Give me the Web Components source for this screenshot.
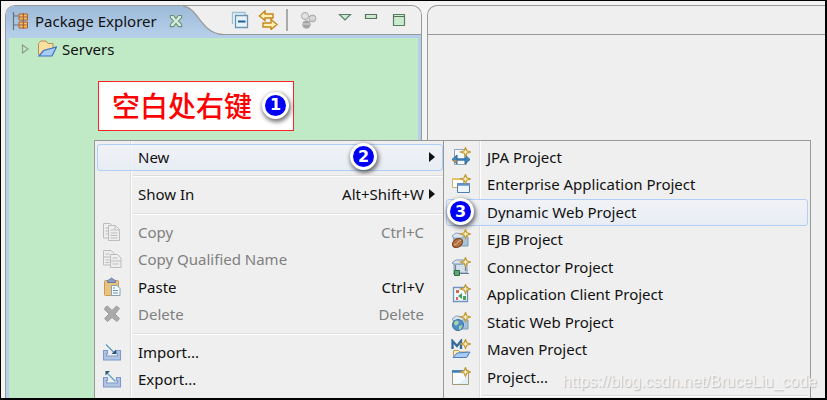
<!DOCTYPE html>
<html lang="en">
<head>
<meta charset="utf-8">
<title>Package Explorer</title>
<style>
  html, body { height: 100%; margin: 0; }
  body { font: 15px/20px "Noto Sans", "Noto Sans CJK SC", sans-serif; color: #1a1a1a; background: #efefef; overflow: hidden; }
</style>
</head>
<body>
<ide-window>
  <explorer-view slot="left" heading="Package Explorer">
    <tree-item>Servers</tree-item>
  </explorer-view>
  <editor-area slot="right"></editor-area>
  <note-box slot="over">空白处右键<step-badge slot="badge">1</step-badge></note-box>
  <menu-cascade slot="over">
    <context-menu label="Package Explorer menu">
      <menu-item active more>New<step-badge slot="badge" class="two">2</step-badge></menu-item>
      <menu-line></menu-line>
      <menu-item keys="Alt+Shift+W" more>Show In</menu-item>
      <menu-line></menu-line>
      <menu-item off icon="copy" keys="Ctrl+C">Copy</menu-item>
      <menu-item off icon="copyname">Copy Qualified Name</menu-item>
      <menu-item icon="paste" keys="Ctrl+V">Paste</menu-item>
      <menu-item off icon="delete" keys="Delete">Delete</menu-item>
      <menu-line></menu-line>
      <menu-item icon="import">Import...</menu-item>
      <menu-item icon="export">Export...</menu-item>
    </context-menu>
    <context-menu label="New" class="sub">
      <menu-item icon="jpa">JPA Project</menu-item>
      <menu-item icon="ear">Enterprise Application Project</menu-item>
      <menu-item active>Dynamic Web Project<step-badge slot="lead">3</step-badge></menu-item>
      <menu-item icon="ejb">EJB Project</menu-item>
      <menu-item icon="connector">Connector Project</menu-item>
      <menu-item icon="client">Application Client Project</menu-item>
      <menu-item icon="web">Static Web Project</menu-item>
      <menu-item icon="maven">Maven Project</menu-item>
      <menu-item icon="project">Project...</menu-item>
      <menu-line></menu-line>
    </context-menu>
  </menu-cascade>
  <water-mark slot="over">https://blog.csdn.net/BruceLiu_code</water-mark>
</ide-window>

<script>
const star = '<path d="M14.500 .5l1.300 3.200 3.700 1.300-3.700 1.300-1.300 3.200-1.300-3.200L9.500 5l3.700-1.300z" fill="#fff3c4" stroke="#c29a38" stroke-width="1.200"/>';
const jar = '<path d="M2 8c0-3 10-5 12-1l3 1v9H5z" fill="#a9c3da" stroke="#7898b5"/><path d="M1 7l4-3 9 1-3 4H3z" fill="#d9e5ef" stroke="#8aa3bb"/>';
const tray = '<path d="M1.500 8.500v9.500h17V8.500h-4v3h1v2.500H4.500v-2.500h1v-3z" fill="#b3c5e4" stroke="#7f9ac8" stroke-width="1.100"/>';
const ICONS = {
  package: '<path d="M2.500 1v18M2.500 5h5M2.500 14h5" stroke="#6a7078" fill="none" stroke-width="1.200"/><path d="M8 3h8.500v6H8zM8 11h8.500v6H8z" fill="#f5bd74" stroke="#a5632b"/><path d="M12.300 2v16M8 6h8.500M8 14h8.500" stroke="#a5632b" stroke-width="1.200"/>',
  close: '<path d="M2 2h4.500L10 6.500 13.500 2H18v3.500L13.500 10l4.500 4.500V18h-4.500L10 13.500 6.500 18H2v-3.500L6.500 10 2 5.500z" fill="#d3efd3" stroke="#6e8c79" stroke-width="1.500"/>',
  folder: '<path d="M1.500 16V4.500L4 2h5l2 2.500h5V9" fill="#f9dfa0" stroke="#b98f55"/><path d="M2 17l4.500-5.500L19.500 8 15 17z" fill="#a9ccf6" stroke="#3d70bd" stroke-width="1.200"/>',
  collapse: '<path d="M2.500 14V2.500H15v3" fill="#eaf5fc" stroke="#9ac0d6" stroke-width="1.300"/><path d="M5.500 5.500h12v12h-12z" fill="#e6f3fb" stroke="#6e93ae" stroke-width="1.300"/><path d="M8 11.500h7.500" stroke="#225f98" stroke-width="1.800"/>',
  link: '<path d="M7 1L1.500 6 7 10.500V8h8V4H7zM13 9.500l6 5-6 5V17H5v-4h8z" fill="#fff0b3" stroke="#c5851f" stroke-width="1.400"/>',
  focus: '<g stroke="#a8a8a8"><circle cx="6" cy="6" r="3.500" fill="#dedede"/><circle cx="13.500" cy="8.500" r="3.500" fill="#cecece"/><circle cx="7.500" cy="14.500" r="3.800" fill="#a2a2a2"/></g><path d="M3 6h6M10.500 8h6M4 14h7" stroke="#eee" stroke-width=".8"/>',
  viewmenu: '<path d="M4.500 4.500h11L10 10z" fill="#c8edcc" stroke="#5e7c69" stroke-width="1.200"/>',
  min: '<path d="M4.500 4.500h11v4h-11z" fill="#c8edcc" stroke="#5e6e63" stroke-width="1.200"/>',
  max: '<path d="M4.500 4.500h11v11h-11z" fill="#c8edcc" stroke="#5e7c69" stroke-width="1.200"/><path d="M4 6.500h12" stroke="#5e6e63" stroke-width="1.200"/>',
  copy: '<g fill="#eee" stroke="#bdbdbd"><path d="M1.500 1.500H8L11.500 5v11h-10z"/><path d="M6.500 3.500h7l4 4v11h-11z"/><path d="M3.500 6h3M3.500 9h3M3.500 12h3M8.500 8h4M8.500 11h7M8.500 13.500h7M8.500 16h7M13 4v4h4"/></g>',
  copyname: '<g fill="#eee" stroke="#bdbdbd"><path d="M1.500 1.500H9L12.500 5v11h-11z"/><path d="M2 8h9M3.500 5h4M3.500 11h4M3.500 13.500h4"/><path d="M8.500 5.500h7l3.500 3.500v9.500H8.500zM8.500 12h10.500M10.500 9h5M10.500 15h6"/></g>',
  paste: '<rect x="2.500" y="3.500" width="14" height="15" rx="1" fill="#e9c27b" stroke="#c79a57"/><path d="M5.500 5.500V3.500l2-1L9.500 1l2 1.500 2 1v2z" fill="#8b9dc2" stroke="#667ba6"/><path d="M9.500 8.500H15l3 3v7H9.500z" fill="#f8fbff" stroke="#86a0b4"/><path d="M11 11h2M11 13.500h5M11 16h5" stroke="#5c91ae"/>',
  delete: '<path d="M3.500 3l2-1L10 6.500 14.500 2l3 2.500-4.500 5.500 4.500 4.500-2.500 3-5-4-4.500 4-3-3L7 10 2.500 5.500z" fill="#aaa" stroke="#9e9e9e" stroke-linejoin="round"/>',
  import: tray + '<path d="M4 2.500l8 8" stroke="#5a9cc9" stroke-width="1.300"/><path d="M14 12V7.500L9.500 12z" fill="#2e5572"/>',
  export: tray + '<path d="M5 4l8.500 8.500" stroke="#5a9cc9" stroke-width="1.300"/><path d="M3.500 2v4.500L8 2z" fill="#2e5572"/>',
  jpa: '<path d="M3.500 2.500h12v15h-12z" fill="#f5f8fc" stroke="#8fa3ba"/><path d="M6 12.500h8" stroke="#3b78ad" stroke-width="2.500"/><path d="M1 12.500L6 8v9zM19 12.500L14 8v9z" fill="#4588bd" stroke="#2f6698"/><path d="M5.500 13l-4 .3 4 3.200z" fill="#c88b47"/>' + star,
  ear: '<path d="M1.500 4.500h11v9h-11z" fill="#fff" stroke="#c5b27e"/><path d="M1 5h11" stroke="#e5c26a" stroke-width="2"/><path d="M6.500 9.500h12v9h-12z" fill="#eef5fc" stroke="#537cae"/><path d="M6 10.500h13" stroke="#5f93cc" stroke-width="2.500"/>' + star,
  ejb: jar + '<ellipse cx="6.500" cy="14" rx="5.500" ry="4" transform="rotate(-35 6.500 14)" fill="#b47343" stroke="#784420"/><path d="M3 16c4 0 3-4 7-5" stroke="#e3b58d" fill="none"/>' + star,
  connector: '<path d="M3 7h13v9H3z" fill="#d3dfe9" stroke="#8098ad"/><path d="M1 6l4-3h8l-2 4H3z" fill="#dce7f1" stroke="#8098ad"/><path d="M4.500 8v6M14.500 8v6M2 16.500h16" stroke="#6d8193" stroke-width="1.200"/><path d="M3.500 13.500h5v5h-5z" fill="#63a579" stroke="#2b7044"/>' + star,
  client: '<path d="M2.500 3.500h14v14h-14z" fill="#f3f8ff" stroke="#7393bd" stroke-width="1.300"/><path d="M5 6h3v3H5z" fill="#d9654c"/><path d="M11 9v6l-4-3z" fill="#4a9a63"/><path d="M12 12h3v4h-3z" fill="#47a45b"/><path d="M5 13h2v3H5z" fill="#d9654c"/>' + star,
  web: jar + '<circle cx="7" cy="13" r="5.500" fill="#4f8fc7" stroke="#386f9f"/><path d="M4 9c3-1 5 0 3 3s-3 1-4 0zM8 14l4-1-2 4-2 1z" fill="#a8d5a5"/>' + star,
  maven: '<path d="M1.500 10V2L6 7l4-5v8" fill="none" stroke="#326b9d" stroke-width="2.300"/><path d="M2.500 17V11.500h5l1.500 1.500h8v4z" fill="#fff1bd" stroke="#bf9b58"/><path d="M2 18.500l4-4.500 13-1-3.500 5.500z" fill="#a8ccf5" stroke="#4e7fbd"/>' + star,
  project: '<path d="M1.500 3.500h16v14h-16z" fill="#f7fbff" stroke="#a39b78"/><path d="M1 4.500h14" stroke="#3f7fbb" stroke-width="2.500"/><path d="M2 17h15V9L9 16z" fill="#e4eff8"/>' + star
};

function define(name, css, html, after) {
  const tpl = document.createElement('template');
  tpl.innerHTML = '<style>*{box-sizing:border-box}' + css + '</style>' + html;
  customElements.define(name, class extends HTMLElement {
    constructor() {
      super();
      this.attachShadow({ mode: 'open' }).append(tpl.content.cloneNode(true));
    }
    connectedCallback() { if (after) after(this, this.shadowRoot); }
  });
}

define('ui-icon', ':host{display:block;width:20px;height:20px;flex:none}:host([name=close]){width:14px;height:14px}svg{display:block;width:100%;height:100%}', '',
  (el, root) => {
    if (!root.querySelector('svg')) root.innerHTML += '<svg viewBox="0 0 20 20" aria-hidden="true">' + (ICONS[el.getAttribute('name')] || '') + '</svg>';
  });

define('step-badge', `
  :host{display:grid;place-items:center;width:27px;height:27px;border-radius:50%;border:3px solid #fff;background:#0000f4;color:#fff;
    font:bold 16px/20px "DejaVu Sans",sans-serif;box-shadow:1px 2px 4px 1px #0008;box-sizing:border-box;flex:none}`, '<slot></slot>');

define('ide-window', `
  :host{display:grid;grid-template-columns:418fr 398fr;gap:5px;height:100%;box-sizing:border-box;position:relative;overflow:hidden;
    border:1px solid #000;border-right-width:2px;border-bottom-width:2px;padding:4px 0 0 4px;background:#f4f4f4}
  ::slotted(*){min-width:0}`,
  '<slot name="left"></slot><slot name="right"></slot><slot name="over"></slot>');

define('explorer-view', `
  :host{display:flex;flex-direction:column;border:1px solid #999;border-bottom:0;border-radius:10px 10px 0 0;overflow:hidden;background:#b5cfea}
  header{display:flex;height:29px;background:#efefef;border-bottom:1px solid #999;flex:none;overflow:visible}
  .tab{display:flex;align-items:center;flex:none;height:29px;padding-left:5px;background:linear-gradient(#9dbad8,#b5cfea)}
  h1{font:inherit;margin:0 12px 0 4px;color:#111}
  .curve{flex:none;width:40px;height:29px;display:block}
  nav{display:flex;align-items:center;flex:1;justify-content:flex-end;padding-right:12px}
  button{display:block;padding:0;border:0;background:none}
  i{width:2px;height:22px;background:#aaa;margin:0 11px 0 8px}
  .gap{margin-right:8px}.tight{margin-right:16px}.wide{margin-right:6px}
  main{flex:1;margin:3px 3px 0;background:#c0e9c6;padding:1px 0}`,
  `<header><div class="tab"><ui-icon name="package"></ui-icon><h1></h1><button aria-label="Close"><ui-icon name="close"></ui-icon></button></div>
  <svg class="curve" viewBox="0 0 40 29" aria-hidden="true"><defs><linearGradient id="g" x2="0" y2="1"><stop stop-color="#9dbad8"/><stop offset="1" stop-color="#b5cfea"/></linearGradient></defs>
  <path d="M0 0C16 2 18 28 40 29H0z" fill="url(#g)"/><path d="M0 0C16 2 18 28 40 28.500" fill="none" stroke="#999" stroke-width="1.300"/></svg>
  <nav><button class="gap" aria-label="Collapse All"><ui-icon name="collapse"></ui-icon></button><button aria-label="Link with Editor"><ui-icon name="link"></ui-icon></button><i></i>
  <button class="tight" aria-label="Focus"><ui-icon name="focus"></ui-icon></button><button class="wide" aria-label="View Menu"><ui-icon name="viewmenu"></ui-icon></button>
  <button class="gap" aria-label="Minimize"><ui-icon name="min"></ui-icon></button><button aria-label="Maximize"><ui-icon name="max"></ui-icon></button></nav></header>
  <main><slot></slot></main>`,
  (el, root) => { root.querySelector('h1').textContent = el.getAttribute('heading'); });

define('tree-item', `
  :host{display:flex;align-items:center;height:20px;padding-left:11px;color:#111}
  svg{width:10px;height:12px;margin-right:7px}span{margin-left:5px}`,
  '<svg viewBox="0 0 10 12" aria-hidden="true"><path d="M2.500 2v8L8 6z" fill="none" stroke="#8aa18e" stroke-width="1.200"/></svg><ui-icon name="folder"></ui-icon><span><slot></slot></span>');

define('editor-area', `
  :host{display:block;border:solid #999;border-width:1px 0 0 1px;border-radius:10px 0 0 0;background:#efefef}
  header{height:29px;border-bottom:1px solid #999}`, '<header></header>');

define('note-box', `
  :host{position:absolute;left:97px;top:80px;display:flex;align-items:center;gap:10px;height:50px;padding:0 4px 2px 13px;border:1px solid #f22;background:#fff;
    color:#f00;font:500 28px/40px "Noto Sans CJK SC",sans-serif;box-sizing:border-box}`,
  '<span><slot></slot></span><slot name="badge"></slot>');

define('menu-cascade', ':host{position:absolute;left:93px;right:14px;top:139px;bottom:0;display:grid;grid-template-columns:349fr 368fr}', '<slot></slot>');

define('context-menu', `
  :host{display:block;border:solid #999;border-width:1px 1px 0;background:linear-gradient(90deg,#efefef 35px,#ddd 35px 36px,#fff 36px 37px,#efefef 37px);box-sizing:border-box;padding:3px 2px 0;min-width:0}
  :host(:first-child){border-right:0;padding-right:0}
  ::slotted(menu-item){height:27px}
  ::slotted(menu-item:nth-of-type(even)){height:28px}`,
  '<slot></slot>', el => { el.setAttribute('role', 'menu'); el.setAttribute('aria-label', el.getAttribute('label')); });

define('menu-line', ':host{display:flex;height:10px;align-items:center;padding-left:36px}hr{flex:1;margin:0;border:solid;border-width:1px 0;border-color:#ddd #fff #fff}', '<hr>');

define('menu-item', `
  :host{display:block}
  button{display:flex;align-items:center;width:100%;height:100%;padding:0 5px 2px 0;border:1px solid transparent;border-radius:3px;background:none;font:inherit;color:#111;text-align:left}
  :host([active]) button{border-color:#aecff7;background:linear-gradient(#f1f3f7cc,#e6ecf5cc)}
  :host([off]) button{color:#808080}
  .lead{display:flex;width:40px;padding-left:4px;flex:none}
  .text{flex:1;white-space:nowrap}
  .keys{margin-right:5px}
  .arrow{width:6px;height:10px;margin-right:2px}
  .arrow[hidden]{visibility:hidden;display:block}
  ::slotted(.two){margin-right:47px}
  ::slotted([slot=lead]){margin-left:-4px}`,
  `<button role="menuitem"><span class="lead"><slot name="lead"></slot></span><span class="text"><slot></slot></span><slot name="badge"></slot><span class="keys"></span>
  <svg class="arrow" viewBox="0 0 6 10" aria-hidden="true"><path d="M0 0l6 5-6 5z" fill="#111"/></svg></button>`,
  (el, root) => {
    const icon = el.getAttribute('icon');
    if (icon) root.querySelector('slot[name=lead]').innerHTML = '<ui-icon name="' + icon + '"></ui-icon>';
    root.querySelector('.keys').textContent = el.getAttribute('keys') || '';
    root.querySelector('.arrow').toggleAttribute('hidden', !el.hasAttribute('more'));
    root.querySelector('button').disabled = el.hasAttribute('off');
  });

define('water-mark', `
  :host{position:absolute;right:8px;bottom:4px;font:16px/24px "Liberation Sans",sans-serif;color:#f4f4f4;text-shadow:1px 1px 1px #bbb;pointer-events:none}`, '<slot></slot>');
</script>
</body>
</html>
